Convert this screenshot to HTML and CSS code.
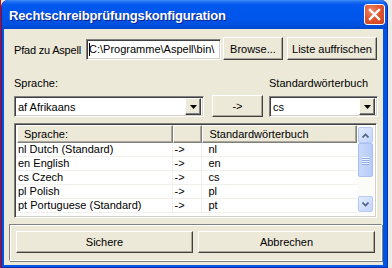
FILE: index.html
```html
<!DOCTYPE html>
<html lang="de">
<head>
<meta charset="utf-8">
<title>Rechtschreibprüfungskonfiguration</title>
<link rel="stylesheet" href="styles.css">
</head>
<body>
<div class="window">
  <div class="titlebar">
    <span class="title">Rechtschreibprüfungskonfiguration</span>
    <span class="close"><svg width="13" height="13" viewBox="0 0 13 13"><path d="M2 2 L11 11 M11 2 L2 11" stroke="#fff" stroke-width="2.4" stroke-linecap="square"/></svg></span>
  </div>
  <div class="client">
    <div class="path-row">
      <span class="lbl path-lbl">Pfad zu Aspell</span>
      <div class="field path-field"><span class="caret"></span><span class="path-text">C:\Programme\Aspell\bin\</span></div>
      <button class="btn browse">Browse...</button>
      <button class="btn refresh">Liste auffrischen</button>
    </div>
    <div class="grid3 labels-row">
      <span class="lbl">Sprache:</span>
      <span></span>
      <span class="lbl">Standardwörterbuch</span>
    </div>
    <div class="grid3 combo-row">
      <div class="field combo"><span class="combo-text">af Afrikaans</span><span class="combo-btn"><svg width="7" height="4" viewBox="0 0 7 4"><path d="M0 0 H7 L3.5 4 Z" fill="#000"/></svg></span></div>
      <button class="btn arrow-btn">-&gt;</button>
      <div class="field combo"><span class="combo-text">cs</span><span class="combo-btn"><svg width="7" height="4" viewBox="0 0 7 4"><path d="M0 0 H7 L3.5 4 Z" fill="#000"/></svg></span></div>
    </div>
    <div class="listview">
      <div class="list-main">
        <div class="list-header">
          <div class="hcell c1">Sprache:</div>
          <div class="hcell c2"></div>
          <div class="hcell c3">Standardwörterbuch</div>
        </div>
        <div class="list-row"><span class="cell c1">nl Dutch (Standard)</span><span class="cell c2">-&gt;</span><span class="cell c3">nl</span></div>
        <div class="list-row"><span class="cell c1">en English</span><span class="cell c2">-&gt;</span><span class="cell c3">en</span></div>
        <div class="list-row"><span class="cell c1">cs Czech</span><span class="cell c2">-&gt;</span><span class="cell c3">cs</span></div>
        <div class="list-row"><span class="cell c1">pl Polish</span><span class="cell c2">-&gt;</span><span class="cell c3">pl</span></div>
        <div class="list-row"><span class="cell c1">pt Portuguese (Standard)</span><span class="cell c2">-&gt;</span><span class="cell c3">pt</span></div>
      </div>
      <div class="scrollbar">
        <div class="sb-btn"><svg width="7" height="5" viewBox="0 0 7 5"><path d="M0.5 4.5 L3.5 1.5 L6.5 4.5" fill="none" stroke="#4d6185" stroke-width="1.6"/></svg></div>
        <div class="sb-thumb"><span class="grip"></span><span class="grip"></span><span class="grip"></span><span class="grip"></span></div>
        <div class="sb-track"></div>
        <div class="sb-btn"><svg width="7" height="5" viewBox="0 0 7 5"><path d="M0.5 0.5 L3.5 3.5 L6.5 0.5" fill="none" stroke="#4d6185" stroke-width="1.6"/></svg></div>
      </div>
    </div>
    <div class="groupbox">
      <button class="btn big">Sichere</button>
      <button class="btn big">Abbrechen</button>
    </div>
  </div>
</div>
</body>
</html>
```
FILE: styles.css
```css
html, body {
  margin: 0;
  height: 268px;
  overflow: hidden;
}
body {
  background: linear-gradient(to right, #d80000 0 1px, #ecebe6 1px);
  font-family: "Liberation Sans", Arial, sans-serif;
  font-size: 11px;
  color: #000;
}
.window {
  margin-left: 1px;
  width: 387px;
  height: 268px;
  box-sizing: border-box;
  background: #0055e5;
  border: 1px solid #0a2fb5;
  border-top: none;
  border-radius: 7px 7px 0 0;
  display: flex;
  flex-direction: column;
  padding: 0 4px 2px 2px;
}
.titlebar {
  height: 29px;
  flex: none;
  margin: 0 -4px 0 -2px;
  padding: 0 2px 0 7px;
  display: flex;
  align-items: center;
  justify-content: space-between;
  border-radius: 7px 7px 0 0;
  background: linear-gradient(#3d8ff9 0, #1e6cf0 2px, #0058ee 5px, #0055ea 18px, #0050de 25px, #0046cc 29px);
}
.title {
  color: #fff;
  font-weight: bold;
  font-size: 13px;
  letter-spacing: -0.15px;
  text-shadow: 1px 1px #0b2290;
  margin-top: 1px;
}
.close {
  width: 19px;
  height: 19px;
  border: 1px solid #fff;
  border-radius: 3px;
  background: radial-gradient(circle at 35% 30%, #f08a6a 0, #e2562f 45%, #c8401c 100%);
  display: flex;
  align-items: center;
  justify-content: center;
}
.client {
  flex: 1;
  background: #ece9d8;
  display: flex;
  flex-direction: column;
  padding-left: 10px;
}
.lbl {
  white-space: nowrap;
}
.path-row {
  margin-top: 8px;
  height: 23px;
  display: flex;
  align-items: center;
}
.path-lbl {
  width: 72px;
  letter-spacing: -0.2px;
  padding-top: 2px;
}
.field {
  box-sizing: border-box;
  background: #fff;
  border: 1px solid;
  border-color: #808080 #fff #fff #808080;
  box-shadow: inset 1px 1px #404040, inset -1px -1px #d4d0c8;
  display: flex;
  align-items: center;
  overflow: hidden;
  white-space: nowrap;
}
.path-field {
  width: 135px;
  height: 21px;
  margin-top: 1px;
  padding-left: 2px;
}
.caret {
  width: 1px;
  height: 13px;
  background: #000;
  flex: none;
}
.path-text {
  margin-left: -1px;
}
.btn {
  box-sizing: border-box;
  font: inherit;
  color: #000;
  background: #ece9d8;
  border: 1px solid;
  border-color: #fff #404040 #404040 #fff;
  box-shadow: inset -1px -1px #aca899;
  padding: 0;
  height: 23px;
}
.browse {
  width: 60px;
  margin-left: 2px;
}
.refresh {
  width: 90px;
  margin-left: 4px;
}
.grid3 {
  display: grid;
  grid-template-columns: 190px 50px 108px;
  column-gap: 8px;
}
.grid3 > :nth-child(3) {
  margin-left: -1px;
}
.labels-row {
  margin-top: 17px;
  height: 13px;
  line-height: 13px;
}
.combo-row {
  margin-top: 5px;
  height: 22px;
  align-items: end;
}
.combo {
  height: 21px;
  justify-content: space-between;
  padding: 2px;
}
.combo-text {
  padding-left: 1px;
}
.combo-btn {
  width: 16px;
  height: 17px;
  box-sizing: border-box;
  background: #ece9d8;
  border: 1px solid;
  border-color: #fff #404040 #404040 #fff;
  box-shadow: inset -1px -1px #808080;
  display: flex;
  align-items: center;
  justify-content: center;
}
.arrow-btn {
  height: 22px;
  width: 51px;
}
.listview {
  margin-top: 6px;
  width: 363px;
  height: 95px;
  box-sizing: border-box;
  border: 1px solid;
  border-color: #808080 #fff #fff #808080;
  box-shadow: inset 1px 1px #404040, inset -1px -1px #d4d0c8;
  padding: 1px 2px 2px 2px;
  background: #fff;
  display: flex;
  overflow: hidden;
}
.list-main {
  flex: 1;
  overflow: hidden;
}
.list-header {
  display: flex;
  height: 18px;
}
.hcell {
  box-sizing: border-box;
  background: #ece9d8;
  border: 1px solid;
  border-color: #fff #808080 #808080 #fff;
  box-shadow: inset -1px -1px #aca899;
  padding-left: 6px;
  line-height: 16px;
  white-space: nowrap;
}
.c1 { width: 156px; }
.c2 { width: 30px; }
.c3 { width: 155px; }
.list-row {
  display: flex;
  height: 14px;
  box-sizing: border-box;
  line-height: 13px;
  border-bottom: 1px solid #f0efe9;
  white-space: nowrap;
}
.cell {
  box-sizing: border-box;
  border-right: 1px solid #f0efe9;
  overflow: hidden;
}
.cell.c1 { padding-left: 1px; }
.cell.c2 { padding-left: 2px; }
.cell.c3 { padding-left: 6px; border-right: none; }
.scrollbar {
  width: 17px;
  display: flex;
  flex-direction: column;
  background: #fbfbf8;
}
.sb-btn {
  height: 16px;
  box-sizing: border-box;
  margin: 2px 1px 0 1px;
  border: 1px solid #b8cbf5;
  border-radius: 2px;
  background: linear-gradient(135deg, #e2ebfe, #c3d4fb);
  display: flex;
  align-items: center;
  justify-content: center;
}
.sb-btn:last-child {
  margin: 0 1px 3px 1px;
}
.sb-thumb {
  height: 34px;
  box-sizing: border-box;
  margin: 0 1px;
  border: 1px solid #a9bff3;
  border-radius: 2px;
  background: linear-gradient(to right, #c9d8fc, #b7cbf8);
  display: flex;
  flex-direction: column;
  align-items: center;
  justify-content: center;
  gap: 1px;
}
.grip {
  width: 7px;
  height: 1px;
  background: #eef3fe;
  box-shadow: 0 1px #8fa9e8;
}
.sb-track {
  flex: 1;
}
.groupbox {
  margin-top: 6px;
  margin-left: -5px;
  width: 373px;
  height: 37px;
  box-sizing: border-box;
  border: 1px solid;
  border-color: #808080 #fff #fff #808080;
  box-shadow: inset 1px 1px #fff, 1px 1px #808080;
  padding: 6px 0 0 6px;
  display: flex;
  gap: 5px;
  align-items: flex-start;
}
.big {
  width: 177px;
  height: 22px;
}
```
